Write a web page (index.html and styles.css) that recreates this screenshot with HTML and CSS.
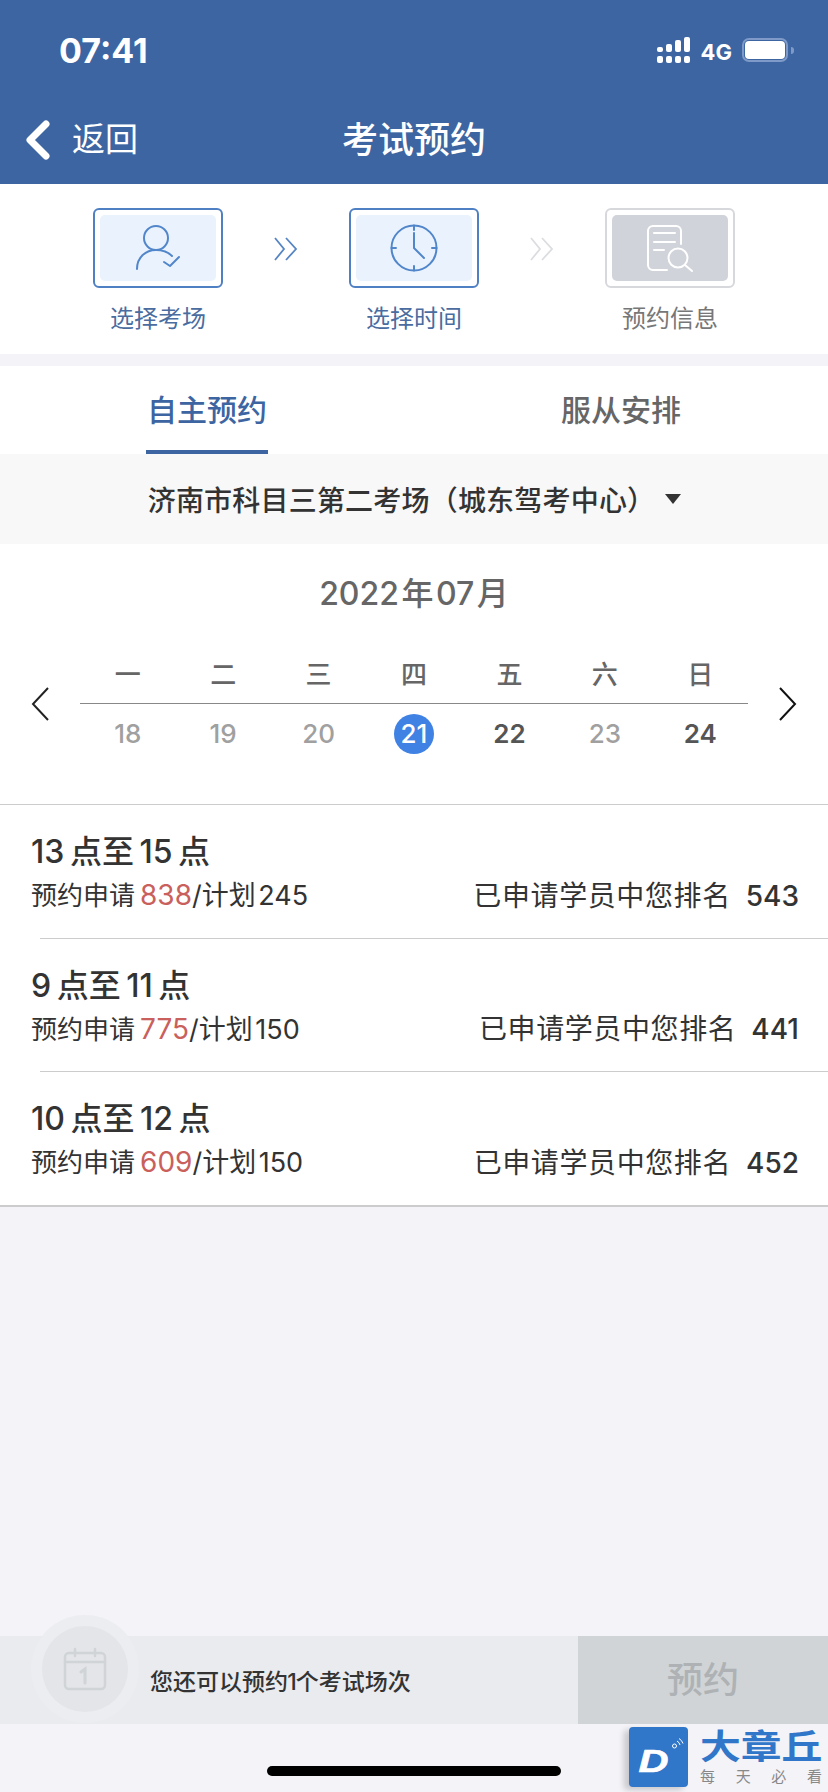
FILE: index.html
```html
<!DOCTYPE html>
<html lang="zh-CN">
<head>
    <meta charset="UTF-8">
    <meta name="viewport" content="width=device-width, initial-scale=1.0">
    <title>考试预约</title>
    <link rel="stylesheet" href="styles.css">
</head>
<body>
<div class="page">
    <header class="top-bar">
        <div class="status-row">
            <span class="status-time">07:41</span>
            <div class="status-right">
                <svg class="signal-icon" width="33" height="26" viewBox="0 0 33 26" fill="#fff">
                    <rect x="0" y="10" width="6" height="5" rx="2"/>
                    <rect x="9" y="7" width="6" height="8" rx="2"/>
                    <rect x="18" y="3" width="6" height="12" rx="2"/>
                    <rect x="27" y="0" width="6" height="15" rx="2"/>
                    <rect x="0" y="19" width="6" height="7" rx="2"/>
                    <rect x="9" y="19" width="6" height="7" rx="2"/>
                    <rect x="18" y="19" width="6" height="7" rx="2"/>
                    <rect x="27" y="19" width="6" height="7" rx="2"/>
                </svg>
                <span class="status-net">4G</span>
                <div class="battery"><div class="battery-level"></div></div>
                <div class="battery-nub"></div>
            </div>
        </div>
        <div class="nav-row">
            <div class="nav-back">
                <svg class="nav-back-icon" width="26" height="40" viewBox="0 0 26 40" fill="none" stroke="#fff" stroke-width="7" stroke-linecap="round" stroke-linejoin="round">
                    <path d="M21 4 L5 20 L21 36"/>
                </svg>
                <span class="nav-back-text">返回</span>
            </div>
            <div class="nav-title">考试预约</div>
        </div>
    </header>

    <section class="steps">
        <div class="step">
            <div class="step-card">
                <svg class="step-icon" viewBox="0 0 116 66" fill="none" stroke="#5286cb" stroke-width="2" stroke-linecap="round" stroke-linejoin="round">
                    <circle cx="56" cy="23" r="12"/>
                    <path d="M37 54 C37 42 46 35 56 35 C62 35 68 37 72 41"/>
                    <path d="M64 47 L70 51 L79 42"/>
                </svg>
            </div>
            <div class="step-label">选择考场</div>
        </div>
        <svg class="step-arrow" width="24" height="24" viewBox="0 0 24 24" fill="none" stroke="#5585c5" stroke-width="1.8">
            <path d="M1 1 L10 12 L1 23"/>
            <path d="M12 1 L22 12 L12 23"/>
        </svg>
        <div class="step">
            <div class="step-card">
                <svg class="step-icon" viewBox="0 0 116 66" fill="none" stroke="#5286cb" stroke-width="2" stroke-linecap="round" stroke-linejoin="round">
                    <circle cx="58" cy="33" r="22.5"/>
                    <path d="M58 10.5 V15 M58 51 V55.5 M35.5 33 H40 M76 33 H80.5"/>
                    <path d="M58 18 V33 L68 43"/>
                </svg>
            </div>
            <div class="step-label">选择时间</div>
        </div>
        <svg class="step-arrow" width="24" height="24" viewBox="0 0 24 24" fill="none" stroke="#dcdde0" stroke-width="1.8">
            <path d="M1 1 L10 12 L1 23"/>
            <path d="M12 1 L22 12 L12 23"/>
        </svg>
        <div class="step step-off">
            <div class="step-card">
                <svg class="step-icon" viewBox="0 0 116 66" fill="none" stroke="#fff" stroke-width="2" stroke-linecap="round" stroke-linejoin="round">
                    <path d="M55 55 H41 A5 5 0 0 1 36 50 V16 A5 5 0 0 1 41 11 H64 A5 5 0 0 1 69 16 V29"/>
                    <path d="M42 18 H63 M42 27 H63 M42 35 H52"/>
                    <circle cx="66" cy="43" r="9.5"/>
                    <path d="M73 50 L80 56"/>
                </svg>
            </div>
            <div class="step-label">预约信息</div>
        </div>
    </section>

    <nav class="tabs">
        <div class="tab tab-active"><span class="tab-text">自主预约</span></div>
        <div class="tab"><span class="tab-text">服从安排</span></div>
    </nav>

    <div class="site-picker">
        <span class="site-name">济南市科目三第二考场（城东驾考中心）</span>
        <span class="site-caret"></span>
    </div>

    <section class="calendar">
        <div class="cal-month">2022 年 07 月</div>
        <div class="cal-body">
            <svg class="cal-prev" width="18" height="34" viewBox="0 0 18 34" fill="none" stroke="#222" stroke-width="2">
                <path d="M17 1 L2 17 L17 33"/>
            </svg>
            <div class="cal-grid">
                <div class="cal-weekdays">
                    <span>一</span><span>二</span><span>三</span><span>四</span><span>五</span><span>六</span><span>日</span>
                </div>
                <div class="cal-dates">
                    <span>18</span>
                    <span>19</span>
                    <span>20</span>
                    <span class="date-current">21</span>
                    <span class="date-open">22</span>
                    <span>23</span>
                    <span class="date-open">24</span>
                </div>
            </div>
            <svg class="cal-next" width="18" height="34" viewBox="0 0 18 34" fill="none" stroke="#111" stroke-width="2">
                <path d="M1 1 L16 17 L1 33"/>
            </svg>
        </div>
    </section>

    <section class="slots">
        <div class="slot">
            <div class="slot-title">13 点至 15 点</div>
            <div class="slot-info">
                <span class="slot-count"><span class="slot-label">预约申请</span><em>838</em>/计划 245</span>
                <span class="slot-rank">已申请学员中您排名<b>543</b></span>
            </div>
        </div>
        <hr class="slot-divider">
        <div class="slot">
            <div class="slot-title">9 点至 11 点</div>
            <div class="slot-info">
                <span class="slot-count"><span class="slot-label">预约申请</span><em>775</em>/计划 150</span>
                <span class="slot-rank">已申请学员中您排名<b>441</b></span>
            </div>
        </div>
        <hr class="slot-divider">
        <div class="slot">
            <div class="slot-title">10 点至 12 点</div>
            <div class="slot-info">
                <span class="slot-count"><span class="slot-label">预约申请</span><em>609</em>/计划 150</span>
                <span class="slot-rank">已申请学员中您排名<b>452</b></span>
            </div>
        </div>
    </section>

    <div class="spacer"></div>

    <footer class="book-bar">
        <div class="book-badge">
            <div class="book-badge-inner">
                <svg width="44" height="44" viewBox="0 0 44 44" fill="none" stroke="#d0d4d6" stroke-width="2.5" stroke-linecap="round">
                    <rect x="2" y="6" width="40" height="36" rx="4"/>
                    <path d="M2 15 H42 M12 2 V9 M32 2 V9"/>
                    <path d="M18 25 L22 22 V36" stroke-width="3"/>
                </svg>
            </div>
        </div>
        <div class="book-text">您还可以预约 1 个考试场次</div>
        <div class="book-btn">预约</div>
    </footer>
    <div class="home-area"><div class="home-bar"></div></div>

    <div class="watermark">
        <div class="wm-logo">
            <span class="wm-d">D</span>
            <svg class="wm-waves" width="14" height="14" viewBox="0 0 14 14" fill="none" stroke="#fff" stroke-width="1">
                <circle cx="3.5" cy="10" r="2"/>
                <path d="M6 5 A6 6 0 0 1 9 9 M8 2.5 A9 9 0 0 1 12 7.5"/>
            </svg>
        </div>
        <div class="wm-text">
            <div class="wm-name">大章丘</div>
            <div class="wm-slogan"><span>每</span><span>天</span><span>必</span><span>看</span></div>
        </div>
    </div>
</div>
</body>
</html>
```

FILE: styles.css
```css
html, body {
    margin: 0;
    padding: 0;
}
body {
    font-family: Inter, 'Noto Sans CJK SC', sans-serif;
    background: #f3f3f8;
    color: #333;
}
.page {
    position: relative;
    width: 828px;
    height: 1792px;
    display: flex;
    flex-direction: column;
    overflow: hidden;
}

/* top bar */
.top-bar {
    height: 184px;
    background: #3c65a2;
    color: #fff;
    flex: none;
}
.status-row {
    height: 100px;
    display: flex;
    align-items: center;
    justify-content: space-between;
    padding: 0 34px 0 59px;
}
.status-time {
    font-size: 34px;
    font-weight: 700;
}
.status-right {
    display: flex;
    align-items: center;
}
.status-net {
    font-size: 22px;
    font-weight: 700;
    margin: 4px 10px 0 11px;
}
.battery {
    width: 46px;
    height: 24px;
    box-sizing: border-box;
    border: 2px solid #7f9ac8;
    border-radius: 7px;
    padding: 1px;
}
.battery-level {
    width: 100%;
    height: 100%;
    background: #fff;
    border-radius: 4px;
}
.battery-nub {
    width: 3px;
    height: 7px;
    margin-left: 3px;
    background: #7f9ac8;
    border-radius: 0 3px 3px 0;
}
.nav-row {
    position: relative;
    height: 74px;
    display: flex;
    align-items: center;
    justify-content: center;
}
.nav-back {
    position: absolute;
    left: 25px;
    top: 0;
    bottom: 0;
    display: flex;
    align-items: center;
}
.nav-back-icon {
    margin-top: 6px;
}
.nav-back-text {
    font-size: 33px;
    margin-left: 21px;
}
.nav-title {
    font-size: 36px;
    font-weight: 500;
}

/* steps */
.steps {
    height: 170px;
    box-sizing: border-box;
    background: #fff;
    margin-bottom: 12px;
    padding: 24px 0 0 93px;
    display: flex;
    align-items: flex-start;
    gap: 51px;
    flex: none;
}
.step {
    width: 130px;
}
.step-card {
    width: 130px;
    height: 80px;
    box-sizing: border-box;
    border: 2px solid #4f80c4;
    border-radius: 6px;
    padding: 5px;
}
.step-icon {
    display: block;
    width: 116px;
    height: 66px;
    background: #eaf3fd;
    border-radius: 5px;
}
.step-label {
    margin-top: 14px;
    margin-left: -10px;
    margin-right: -10px;
    font-size: 24px;
    line-height: 34px;
    text-align: center;
    color: #4a6c9f;
}
.step-off .step-card {
    border-color: #d6d8dc;
}
.step-off .step-icon {
    background: #d0d3da;
}
.step-off .step-label {
    color: #777;
}
.step-arrow {
    margin-top: 29px;
    flex: none;
}

/* tabs */
.tabs {
    height: 88px;
    background: #fff;
    display: flex;
    flex: none;
}
.tab {
    flex: 1;
    display: flex;
    justify-content: center;
}
.tab-text {
    height: 84px;
    line-height: 88px;
    font-size: 30px;
    font-weight: 500;
    color: #666;
    padding: 0 1px;
}
.tab-active .tab-text {
    color: #3c65a2;
    border-bottom: 4px solid #3c65a2;
}

/* site picker */
.site-picker {
    height: 90px;
    background: #f8f8f8;
    display: flex;
    align-items: center;
    justify-content: center;
    padding-left: 1px;
    flex: none;
}
.site-name {
    font-size: 28px;
    font-weight: 500;
    letter-spacing: 0.2px;
    color: #333;
}
.site-caret {
    margin: 0 0 0 10px;
    border-left: 8px solid transparent;
    border-right: 8px solid transparent;
    border-top: 10px solid #333;
}

/* calendar */
.calendar {
    background: #fff;
    height: 260px;
    flex: none;
}
.cal-month {
    padding-top: 28px;
    height: 44px;
    line-height: 44px;
    margin-bottom: 38px;
    text-align: center;
    font-size: 32px;
    font-weight: 500;
    color: #666;
    word-spacing: -6px;
}
.cal-body {
    display: flex;
    align-items: center;
    padding: 0 31px;
    justify-content: space-between;
}
.cal-grid {
    width: 668px;
}
.cal-weekdays,
.cal-dates {
    display: grid;
    grid-template-columns: repeat(7, 1fr);
    text-align: center;
}
.cal-weekdays {
    height: 50px;
    box-sizing: border-box;
    padding-bottom: 8px;
    line-height: 42px;
    font-size: 26px;
    font-weight: 500;
    color: #666;
    border-bottom: 1px solid #888;
}
.cal-dates {
    padding-top: 10px;
    font-size: 26px;
    font-weight: 500;
    color: #a0a0a0;
    justify-items: center;
    line-height: 40px;
}
.date-open {
    color: #555;
    font-weight: 600;
}
.date-current {
    width: 40px;
    height: 40px;
    border-radius: 50%;
    background: #3f82e4;
    color: #fff;
}

/* time slots */
.slots {
    background: #fff;
    border-top: 1px solid #ccc;
    border-bottom: 2px solid #ccc;
    flex: none;
}
.slot {
    height: 132.5px;
    box-sizing: border-box;
    padding: 29px 29px 0 31px;
}
.slot-title {
    font-size: 32px;
    line-height: 36px;
    font-weight: 500;
    color: #333;
    word-spacing: -3px;
}
.slot-info {
    margin-top: 8px;
    display: flex;
    justify-content: space-between;
    align-items: center;
    line-height: 34px;
}
.slot-count {
    font-size: 27px;
    word-spacing: -5px;
    color: #333;
}
.slot-label {
    font-size: 26px;
}
.slot-count em {
    font-size: 28px;
    font-style: normal;
    color: #c9605c;
    margin-left: 5px;
}
.slot-rank {
    font-size: 28px;
    letter-spacing: 0.6px;
    color: #333;
}
.slot-rank b {
    font-size: 28px;
    font-weight: 500;
    letter-spacing: 0;
    margin-left: 15px;
}
.slot-divider {
    border: none;
    border-top: 1px solid #ccc;
    margin: 0 0 0 40px;
}

.spacer {
    flex: 1;
}

/* bottom booking bar */
.book-bar {
    position: relative;
    height: 88px;
    background: #e9ebee;
    display: flex;
    align-items: center;
    flex: none;
}
.book-badge {
    position: absolute;
    left: 31px;
    top: -21px;
    width: 108px;
    height: 108px;
    border-radius: 50%;
    background: #ebedf0;
    display: flex;
    align-items: center;
    justify-content: center;
}
.book-badge-inner {
    width: 86px;
    height: 86px;
    border-radius: 50%;
    background: #e3e5e8;
    display: flex;
    align-items: center;
    justify-content: center;
}
.book-text {
    flex: 1;
    padding: 0 0 0 150px;
    font-size: 23px;
    font-weight: 500;
    color: #333;
    word-spacing: -7px;
}
.book-btn {
    width: 250px;
    height: 88px;
    line-height: 88px;
    text-align: center;
    background: #d0d4d6;
    color: #aeb2b4;
    font-size: 36px;
    font-weight: 500;
}
.home-area {
    height: 68px;
    box-sizing: border-box;
    padding-top: 42px;
    display: flex;
    justify-content: center;
    flex: none;
}
.home-bar {
    width: 294px;
    height: 10px;
    background: #000;
    border-radius: 5px;
}

/* watermark over the corner */
.watermark {
    position: absolute;
    left: 629px;
    top: 1727px;
    width: 199px;
    display: flex;
}
.wm-logo {
    position: relative;
    width: 59px;
    height: 60px;
    background: #3076c9;
    border-radius: 4px;
    box-shadow: -5px 3px 6px rgba(0, 0, 0, 0.18);
}
.wm-d {
    position: absolute;
    left: 13px;
    top: 16px;
    font-family: 'Liberation Sans', sans-serif;
    font-size: 32px;
    line-height: 36px;
    font-weight: 700;
    font-style: italic;
    color: #fff;
    -webkit-text-stroke: 0.6px #fff;
    transform: scaleX(1.3);
}
.wm-waves {
    position: absolute;
    right: 3px;
    top: 9px;
}
.wm-text {
    margin-left: 12px;
    padding-top: 3px;
}
.wm-name {
    font-size: 34px;
    line-height: 34px;
    font-weight: 700;
    color: #3076c9;
    white-space: nowrap;
    transform: scaleX(1.2);
    transform-origin: left center;
}
.wm-slogan {
    display: flex;
    justify-content: space-between;
    width: 122px;
    margin-top: 4px;
    font-size: 15px;
    line-height: 18px;
    color: #888;
}
```
